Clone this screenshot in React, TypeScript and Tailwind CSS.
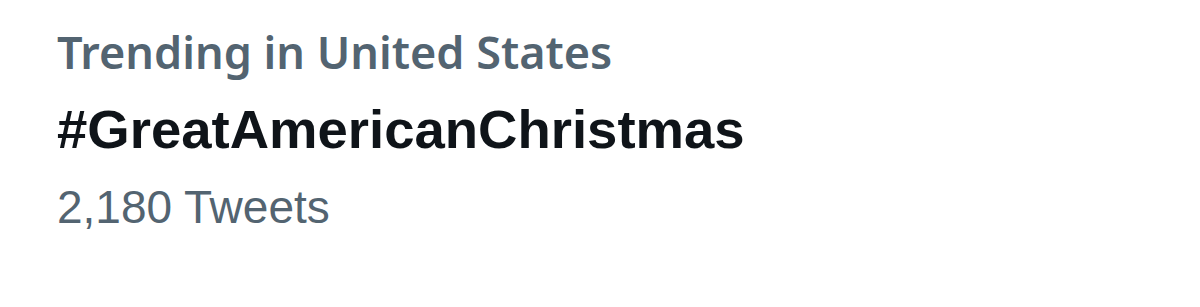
import React from 'react';

export default function App() {
  return (
    <div className="h-[307px] w-[1200px] bg-white">
      <div className="flex flex-col pl-[57px] pt-[24px]">
        <div className="text-[45px] font-semibold leading-[56px] text-[#536471] [font-family:'Noto_Sans',sans-serif]">
          Trending in United States
        </div>
        <div className="mt-[18px] text-[54.5px] font-bold leading-[64px] text-[#0f1419] [font-family:'Liberation_Sans',Arial,sans-serif]">
          #GreatAmericanChristmas
        </div>
        <div className="mt-[19px] text-[46px] leading-[52px] text-[#536471] [font-family:'Liberation_Sans',Arial,sans-serif]">
          2,180 Tweets
        </div>
      </div>
    </div>
  );
}
